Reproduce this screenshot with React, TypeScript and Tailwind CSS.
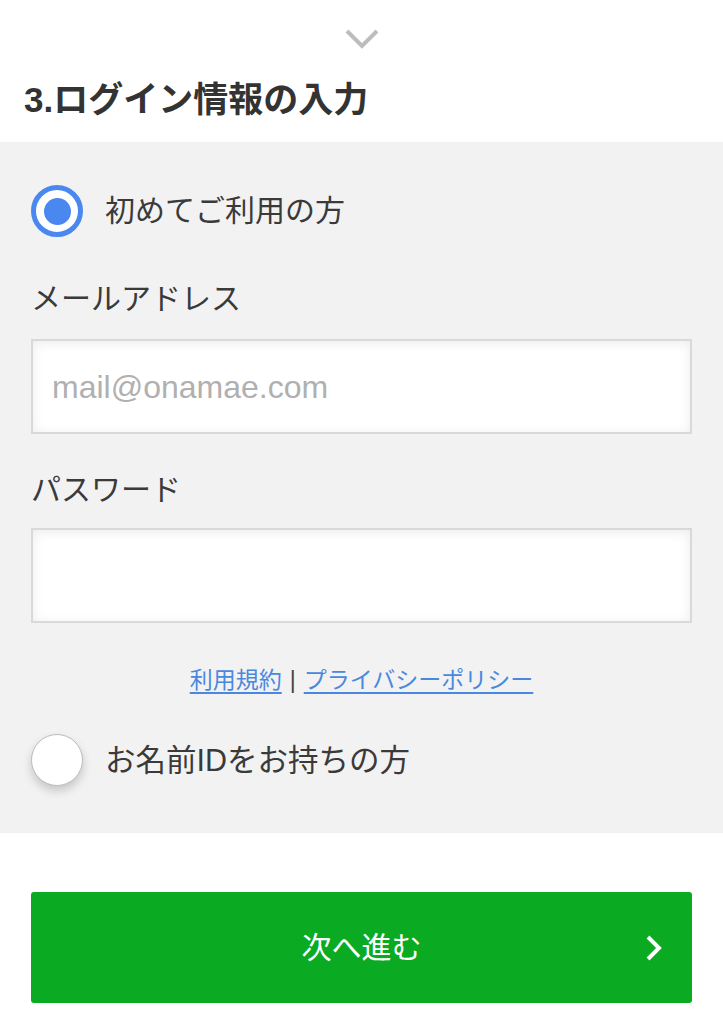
export default function App() {
  const font = { fontFamily: '"Liberation Sans", "Noto Sans CJK JP", sans-serif' };

  return (
    <div className="w-[723px] min-h-[1024px] bg-white text-[#333]" style={font}>
      {/* header */}
      <div className="h-[142px] flex flex-col">
        <svg className="mx-auto mt-[28px]" width="34" height="22" viewBox="0 0 34 22">
          <path d="M2 3 L17 18 L32 3" fill="none" stroke="#bdbdbd" strokeWidth="4" />
        </svg>
        <h2 className="mt-[30px] pl-[24px] text-[35px] leading-[40px] font-bold text-[#333]">
          3.ログイン情報の入力
        </h2>
      </div>

      {/* form */}
      <div className="bg-[#f2f2f2] px-[31px] pt-[43px] pb-[47px]">
        <div className="flex items-center gap-[22px] h-[52px]">
          <span className="w-[52px] h-[52px] rounded-full border-[5px] border-[#4a88ef] bg-white flex items-center justify-center">
            <span className="w-[27px] h-[27px] rounded-full bg-[#4a88ef]" />
          </span>
          <span className="text-[30px] leading-[40px] text-[#3a3a3a]">初めてご利用の方</span>
        </div>

        <div className="mt-[42px] text-[30px] leading-[40px] text-[#3a3a3a]">メールアドレス</div>
        <div className="mt-[20px] h-[95px] border-2 border-[#d9d9d9] bg-white shadow-[inset_0_2px_12px_rgba(0,0,0,0.08)] flex items-center pl-[19px]">
          <span className="text-[32px] text-[#b0b0b0]">mail@onamae.com</span>
        </div>

        <div className="mt-[36px] text-[30px] leading-[40px] text-[#3a3a3a]">パスワード</div>
        <div className="mt-[18px] h-[95px] border-2 border-[#d9d9d9] bg-white shadow-[inset_0_2px_12px_rgba(0,0,0,0.08)]" />

        <div className="mt-[42px] flex justify-center items-center gap-[8px] text-[23px] leading-[30px]">
          <span className="text-[#4a88e0] underline underline-offset-4">利用規約</span>
          <span className="text-[#444]">|</span>
          <span className="text-[#4a88e0] underline underline-offset-4">プライバシーポリシー</span>
        </div>

        <div className="mt-[39px] flex items-center gap-[22px] h-[52px]">
          <span className="w-[52px] h-[52px] rounded-full border border-[#bcbcbc] bg-white shadow-[0_5px_10px_rgba(0,0,0,0.18)]" />
          <span className="text-[30.5px] leading-[40px] text-[#3a3a3a]">お名前IDをお持ちの方</span>
        </div>
      </div>

      {/* button */}
      <div className="px-[31px] pt-[59px]">
        <div className="relative h-[111px] rounded-[3px] bg-[#0aab23] flex items-center justify-center">
          <span className="text-[30px] text-white">次へ進む</span>
          <svg className="absolute right-[28px]" width="20" height="28" viewBox="0 0 20 28">
            <path d="M4 3 L15 14 L4 25" fill="none" stroke="#fff" strokeWidth="4" />
          </svg>
        </div>
      </div>
    </div>
  );
}
